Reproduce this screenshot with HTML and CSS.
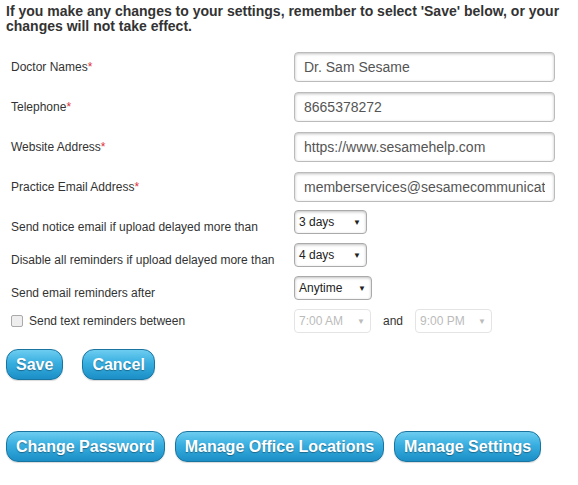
FILE: index.html
```html
<!DOCTYPE html>
<html lang="en">

<head>
  <meta charset="UTF-8">
  <meta name="viewport" content="width=device-width, initial-scale=1.0">
  <title>Practice Settings</title>
  <link rel="stylesheet" href="styles.css">
</head>

<body>

  <div class="page">
    <p class="notice">If you make any changes to your settings, remember to select 'Save' below, or your changes will not take effect.</p>

    <div class="settings-form">
      <div class="row text-row">
        <label>Doctor Names<span class="req">*</span></label>
        <input type="text" value="Dr. Sam Sesame">
      </div>
      <div class="row text-row">
        <label>Telephone<span class="req">*</span></label>
        <input type="text" value="8665378272">
      </div>
      <div class="row text-row">
        <label>Website Address<span class="req">*</span></label>
        <input type="text" value="https://www.sesamehelp.com">
      </div>
      <div class="row text-row last">
        <label>Practice Email Address<span class="req">*</span></label>
        <input type="text" value="memberservices@sesamecommunications.com">
      </div>

      <div class="row select-row">
        <label>Send notice email if upload delayed more than</label>
        <div class="select days">3 days<span class="arrow">&#9660;</span></div>
      </div>
      <div class="row select-row">
        <label>Disable all reminders if upload delayed more than</label>
        <div class="select days">4 days<span class="arrow">&#9660;</span></div>
      </div>
      <div class="row select-row">
        <label>Send email reminders after</label>
        <div class="select anytime">Anytime<span class="arrow">&#9660;</span></div>
      </div>
      <div class="row check-row">
        <label><span class="checkbox"></span>Send text reminders between</label>
        <div class="time-range">
          <div class="select time disabled">7:00 AM<span class="arrow">&#9660;</span></div>
          <span class="and">and</span>
          <div class="select time disabled">9:00 PM<span class="arrow">&#9660;</span></div>
        </div>
      </div>
    </div>

    <div class="actions">
      <button class="btn">Save</button>
      <button class="btn">Cancel</button>
    </div>

    <div class="links">
      <button class="btn">Change Password</button>
      <button class="btn">Manage Office Locations</button>
      <button class="btn">Manage Settings</button>
    </div>
  </div>

</body>

</html>
```

FILE: styles.css
```css
body {
  font-family: 'Liberation Sans', Arial, sans-serif;
  margin: 0;
  padding: 0;
  background-color: white;
  color: #333;
}

.page {
  padding: 4px 6px;
}

.notice {
  font-size: 14px;
  font-weight: bold;
  line-height: 15px;
  margin: 0 0 18px 0;
  color: #333;
}

.settings-form {
  padding-left: 5px;
}

.row {
  display: grid;
  grid-template-columns: 283px 261px;
  align-items: center;
  font-size: 12px;
  color: #333;
}

.text-row {
  height: 30px;
  margin-bottom: 10px;
}

.text-row.last {
  margin-bottom: 8px;
}

.select-row {
  height: 24px;
  margin-bottom: 9px;
}

.select-row label {
  padding-top: 9px;
}

.check-row {
  height: 24px;
}

.req {
  color: #e0303a;
}

.row input[type="text"] {
  box-sizing: border-box;
  width: 261px;
  height: 30px;
  padding: 0 9px;
  font-family: inherit;
  font-size: 14px;
  color: #555;
  border: 1px solid #bbb;
  border-radius: 4px;
  box-shadow: inset 0 1px 3px rgba(0, 0, 0, 0.25);
  outline: none;
}

.select {
  box-sizing: border-box;
  height: 24px;
  display: flex;
  align-items: center;
  justify-content: space-between;
  padding: 0 5px 0 4px;
  font-size: 12px;
  color: #222;
  border: 1px solid #aaa;
  border-radius: 4px;
  box-shadow: inset 0 1px 3px rgba(0, 0, 0, 0.25);
  background-color: white;
}

.arrow {
  font-size: 8px;
  color: #222;
}

.days {
  width: 73px;
}

.anytime {
  width: 78px;
}

.time {
  width: 77px;
}

.disabled {
  color: #bbb;
  border-color: #e4e4e4;
  box-shadow: none;
}

.disabled .arrow {
  color: #bbb;
}

.time-range {
  display: flex;
  align-items: center;
}

.and {
  margin: 0 12px 0 12px;
  font-size: 12px;
  color: #333;
}

.check-row label {
  display: flex;
  align-items: center;
}

.checkbox {
  display: inline-block;
  box-sizing: border-box;
  width: 12px;
  height: 12px;
  border: 1px solid #aaa;
  border-radius: 2px;
  background-color: #eee;
  margin-right: 6px;
}

.btn {
  font-family: 'Liberation Sans', Arial, sans-serif;
  font-size: 16px;
  font-weight: bold;
  color: white;
  height: 31px;
  padding: 0 9px;
  border: 1px solid #1a74a0;
  border-radius: 12px;
  background: linear-gradient(to bottom, #6dcdf0 0%, #38aee0 45%, #1b8fc6 100%);
  box-shadow: 0 1px 1px rgba(0, 0, 0, 0.15);
  text-shadow: 0 1px 1px rgba(0, 0, 0, 0.35);
  cursor: pointer;
}

.actions {
  display: flex;
  gap: 19px;
  margin-top: 16px;
}

.links {
  display: flex;
  gap: 10px;
  margin-top: 51px;
}
```
